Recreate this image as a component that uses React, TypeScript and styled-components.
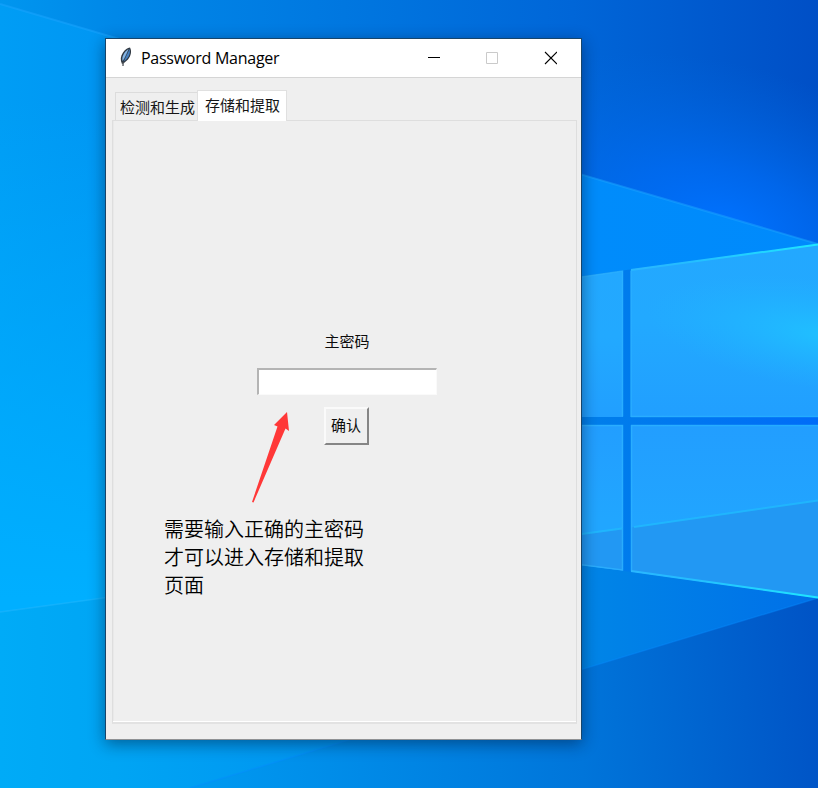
import React from "react";
import styled, { createGlobalStyle, css } from "styled-components";

const GlobalStyle = createGlobalStyle`
  * { box-sizing: border-box; }
  html, body { margin: 0; padding: 0; overflow: hidden; }
  body { font-family: "Noto Sans CJK SC", sans-serif; color: #000; }
`;

const Desktop = styled.main`
  position: relative;
  width: 818px;
  height: 788px;
  padding: 38px 0 0 105px;
  overflow: hidden;
  background: #008ef0;
`;

const WallpaperArt = styled.svg`
  position: absolute;
  inset: 0;
  width: 818px;
  height: 788px;
`;

const AppWindow = styled.section`
  position: relative;
  display: flex;
  flex-direction: column;
  width: 477px;
  height: 702px;
  border: 1px solid #17456b;
  border-bottom-color: #8f9194;
  background: #efefef;
  box-shadow: 0 4px 15px rgba(0, 20, 50, 0.48);
`;

const TitleBar = styled.header`
  display: flex;
  align-items: center;
  flex: none;
  height: 39px;
  padding-left: 13px;
  background: #fff;
  border-bottom: 1px solid #d5d5d5;
`;

const FeatherIcon = styled.svg`
  width: 14px;
  height: 20px;
  flex: none;
  margin-bottom: 2px;
`;

const Title = styled.h1`
  flex: 1;
  margin: 0 0 1px 8px;
  font: 400 16px/24px "Open Sans", sans-serif;
  letter-spacing: -0.26px;
  white-space: nowrap;
`;

const WindowButtons = styled.div`
  display: flex;
  padding-right: 2px;
`;

const WindowButton = styled.button<{ $muted?: boolean }>`
  display: grid;
  place-items: center;
  width: 58px;
  height: 38px;
  padding: 0;
  border: 0;
  background: transparent;
  color: ${(p) => (p.$muted ? "#cacaca" : "#000")};
`;

const ButtonGlyph = styled.svg`
  width: 14px;
  height: 14px;
  fill: none;
  stroke: currentColor;
`;

const Notebook = styled.div`
  flex: 1;
  display: flex;
  flex-direction: column;
  padding: 12px 4px 15px 6px;
`;

const TabList = styled.nav`
  display: flex;
  align-items: flex-end;
  height: 30px;
  padding-left: 3px;
`;

const Tab = styled.button<{ $active?: boolean }>`
  position: relative;
  padding: 0;
  font: 400 15px/24px "Noto Sans CJK SC", sans-serif;
  color: #161616;
  white-space: nowrap;
  ${(p) =>
    p.$active
      ? css`
          z-index: 1;
          width: 90px;
          height: 31px;
          margin-bottom: -1px;
          padding: 0 0 3px 1px;
          border: 1px solid #e0e0e0;
          border-bottom: 0;
          background: #fff;
        `
      : css`
          width: 82px;
          height: 28px;
          border: 1px solid #dcdcdc;
          border-width: 1px 0 0 1px;
          padding: 1px 0 0 2px;
          background: #efefef;
        `}
`;

const Page = styled.div`
  flex: 1;
  display: flex;
  flex-direction: column;
  align-items: center;
  padding: 207px 0 0 4px;
  border: 1px solid #dedede;
  border-bottom: 2px solid #e2e2e2;
  box-shadow: inset 0 -1px #fff, inset 1px 0 #e9e9e9;
`;

const FieldLabel = styled.label`
  padding-left: 1px;
  font-size: 15px;
  line-height: 26px;
  color: #0c0c0c;
`;

const PasswordInput = styled.input`
  width: 180px;
  height: 27px;
  margin-top: 14px;
  padding: 0 4px;
  border: solid;
  border-width: 2px 1px 1px 2px;
  border-color: #b4b4b4 #fafafa #fafafa #b4b4b4;
  border-radius: 0;
  background: #fff;
  outline: 0;
`;

const ConfirmButton = styled.button`
  width: 45px;
  height: 38px;
  margin-top: 12px;
  padding: 0 1px 3px 0;
  border: 2px solid;
  border-color: #fafafa #858585 #858585 #fafafa;
  background: #efefef;
  font: 400 15px/24px "Noto Sans CJK SC", sans-serif;
  color: #0c0c0c;
`;

const Annotation = styled.aside`
  position: absolute;
  left: 58px;
  top: 373px;
  width: 204px;
`;

const Arrow = styled.svg`
  display: block;
  width: 40px;
  height: 92px;
  margin-left: 87px;
  fill: #ff3838;
`;

const Note = styled.p`
  margin: 11px 0 0;
  font-size: 20px;
  line-height: 28px;
  font-weight: 350;
`;

function Wallpaper() {
  return (
    <WallpaperArt viewBox="0 0 818 788" aria-hidden="true">
      <defs>
        <linearGradient id="sky" gradientUnits="userSpaceOnUse" x1="0" y1="0" x2="818" y2="0">
          <stop offset="0" stopColor="#0096ef" />
          <stop offset=".14" stopColor="#0088e8" />
          <stop offset=".7" stopColor="#0066d8" />
          <stop offset="1" stopColor="#004fc6" />
        </linearGradient>
        <radialGradient id="glow" gradientUnits="userSpaceOnUse" cx="0" cy="0" r="1" gradientTransform="translate(725 225) rotate(16) scale(290 160)">
          <stop offset="0" stopColor="#0072ff" />
          <stop offset=".35" stopColor="#006ef8" stopOpacity=".7" />
          <stop offset="1" stopColor="#0068e0" stopOpacity="0" />
        </radialGradient>
        <linearGradient id="beam" gradientUnits="userSpaceOnUse" x1="0" y1="0" x2="818" y2="0">
          <stop offset="0" stopColor="#009df5" />
          <stop offset=".13" stopColor="#0096f3" />
          <stop offset=".72" stopColor="#008cfb" />
          <stop offset="1" stopColor="#008afc" />
        </linearGradient>
        <linearGradient id="beamLow" gradientUnits="userSpaceOnUse" x1="0" y1="100" x2="0" y2="600">
          <stop offset="0" stopColor="#00b0ff" stopOpacity="0" />
          <stop offset="1" stopColor="#00afff" />
        </linearGradient>
        <linearGradient id="lower" gradientUnits="userSpaceOnUse" x1="0" y1="0" x2="818" y2="0">
          <stop offset="0" stopColor="#00abf7" />
          <stop offset=".14" stopColor="#00a5f4" />
          <stop offset=".4" stopColor="#0094f0" />
          <stop offset=".73" stopColor="#0084e7" />
          <stop offset="1" stopColor="#0070e8" />
        </linearGradient>
        <linearGradient id="ground" gradientUnits="userSpaceOnUse" x1="190" y1="740" x2="818" y2="700">
          <stop offset="0" stopColor="#009af1" />
          <stop offset=".62" stopColor="#0075da" />
          <stop offset="1" stopColor="#0054c6" />
        </linearGradient>
        <linearGradient id="pane" x1="0" y1="0" x2="0" y2="1">
          <stop offset="0" stopColor="#23a8ff" />
          <stop offset=".45" stopColor="#22a9ff" />
          <stop offset="1" stopColor="#219fff" />
        </linearGradient>
        <radialGradient id="paneGlow" gradientUnits="userSpaceOnUse" cx="0" cy="0" r="1" gradientTransform="translate(825 335) rotate(8) scale(180 55)">
          <stop offset="0" stopColor="#20c0ff" />
          <stop offset="1" stopColor="#20b4ff" stopOpacity="0" />
        </radialGradient>
        <linearGradient id="paneLow" x1="0" y1="0" x2="0" y2="1">
          <stop offset="0" stopColor="#229eff" />
          <stop offset=".65" stopColor="#21a6ff" />
        </linearGradient>
        <linearGradient id="edge" gradientUnits="userSpaceOnUse" x1="582" y1="0" x2="818" y2="0">
          <stop offset="0" stopColor="#2eb2ff" />
          <stop offset=".45" stopColor="#24bdff" />
          <stop offset="1" stopColor="#1fe7ff" />
        </linearGradient>
        <linearGradient id="frame" gradientUnits="userSpaceOnUse" x1="582" y1="0" x2="818" y2="0">
          <stop offset="0" stopColor="#2eb2ff" />
          <stop offset="1" stopColor="#24b0ff" />
        </linearGradient>
        <linearGradient id="gap" gradientUnits="userSpaceOnUse" x1="582" y1="0" x2="818" y2="0">
          <stop offset="0" stopColor="#007fea" />
          <stop offset="1" stopColor="#006cf8" />
        </linearGradient>
      </defs>
      <rect width="818" height="788" fill="url(#sky)" />
      <rect x="430" width="388" height="400" fill="url(#glow)" />
      <path d="M0 4 818 244V600H0Z" fill="url(#beam)" />
      <path d="M0 4 400 121V560L0 612Z" fill="url(#beamLow)" />
      <path d="M0 4 818 244" stroke="#1ca5ff" strokeWidth="2" opacity=".5" />
      <path d="M0 612 818 500V788H0Z" fill="url(#lower)" />
      <path d="M0 612 582 533" stroke="#25b9ff" strokeWidth="1.5" opacity=".5" />
      <path d="M190 788 818 598V788Z" fill="url(#ground)" />
      <path d="M190 788 818 598" stroke="#078cff" strokeWidth="1.5" opacity=".4" />

      <path d="M560 279 818 244V598L560 562Z" fill="url(#gap)" />
      <path d="M560 280 623 271V417H560Z" fill="url(#pane)" />
      <path d="M631 269.500 818 244V417H631Z" fill="url(#pane)" />
      <path d="M631 269.500 818 244V417H631Z" fill="url(#paneGlow)" />
      <path d="M560 425H623V570.500L560 562.500Z" fill="url(#paneLow)" />
      <path d="M631 425H818V598L631 571.500Z" fill="url(#paneLow)" />
      <path d="M560 537 623 528V570.500L560 562.500ZM631 527.500 818 500V598L631 571.500Z" fill="#2298f3" />
      <g fill="none" stroke="url(#frame)" strokeWidth="1.500" opacity=".8">
        <path d="M560 280 622.500 271V416.500M560 425.500H622.500V570L560 562M631 270.500V417M631 416.500H818M631 425.500H818M631.500 425V571" />
        <path d="M560 537 622 528.500M634 527 818 500.500" stroke="#20bcff" strokeWidth="2" />
      </g>
      <path d="M631 270 818 244.500M631 571 818 597.500" fill="none" stroke="url(#edge)" strokeWidth="2" />
    </WallpaperArt>
  );
}

function Feather() {
  return (
    <FeatherIcon viewBox="0 0 14 20" aria-hidden="true">
      <path d="M3 17C1 13 1.500 9 4 5.500 6 2.500 8.500 1 11 .5 13 4 12 9 9 12.500L5 16Z" fill="#303842" />
      <path d="M3.500 14C2.500 10 5 5 9.500 2 8 7 6.500 11 3.500 14Z" fill="#86b6e6" />
      <path d="M4.500 14.500C7 10 8.500 6 10.500 2 12 7 9 12 4.500 14.500Z" fill="#4680c0" />
      <path d="M4 19C4 14 7 8 10 2.500" fill="none" stroke="#34465b" strokeWidth=".6" />
      <path d="M4 15V19" stroke="#555" />
    </FeatherIcon>
  );
}

export default function App() {
  return (
    <>
      <GlobalStyle />
      <Desktop>
        <Wallpaper />
        <AppWindow>
          <TitleBar>
            <Feather />
            <Title>Password Manager</Title>
            <WindowButtons>
              <WindowButton aria-label="Minimize">
                <ButtonGlyph viewBox="0 0 14 14"><path d="M1 6.500H13" /></ButtonGlyph>
              </WindowButton>
              <WindowButton $muted disabled aria-label="Maximize">
                <ButtonGlyph viewBox="0 0 14 14"><path d="M1.500 1.500H12.500V12.500H1.500Z" /></ButtonGlyph>
              </WindowButton>
              <WindowButton aria-label="Close">
                <ButtonGlyph viewBox="0 0 14 14"><path d="M2 1 14 13M14 1 2 13" strokeWidth="1.100" /></ButtonGlyph>
              </WindowButton>
            </WindowButtons>
          </TitleBar>
          <Notebook>
            <TabList>
              <Tab>检测和生成</Tab>
              <Tab $active>存储和提取</Tab>
            </TabList>
            <Page>
              <FieldLabel htmlFor="master">主密码</FieldLabel>
              <PasswordInput id="master" type="password" />
              <ConfirmButton>确认</ConfirmButton>
            </Page>
          </Notebook>
          <Annotation>
            <Arrow viewBox="0 0 40 92" aria-hidden="true">
              <path d="M36 0 23 13 26.500 14.500 1 90 2.500 90.500 34.500 16.500 38 19Z" />
            </Arrow>
            <Note>需要输入正确的主密码才可以进入存储和提取页面</Note>
          </Annotation>
        </AppWindow>
      </Desktop>
    </>
  );
}
